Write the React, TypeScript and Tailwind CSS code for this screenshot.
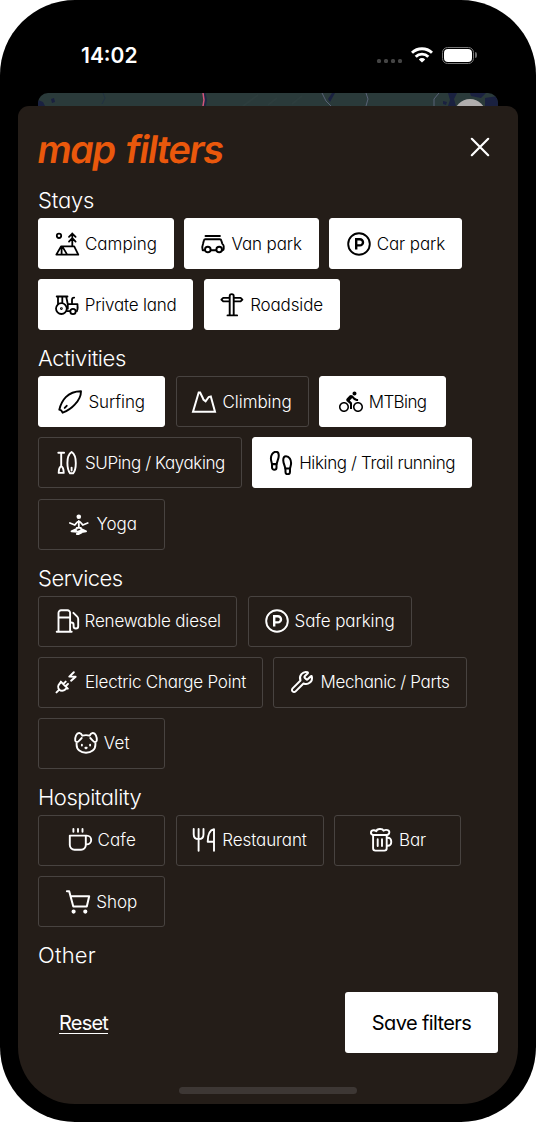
import type { ReactNode } from "react";
import { MdDirectionsBike } from "react-icons/md";
import { Footprints, Wrench } from "lucide-react";

function Glyph({ children, width = 1.9 }: { children: ReactNode; width?: number }) {
  return (
    <svg
      viewBox="0 0 24 24"
      className="h-6 w-6 shrink-0 overflow-visible"
      fill="none"
      stroke="currentColor"
      strokeWidth={width}
      strokeLinecap="round"
      strokeLinejoin="round"
    >
      {children}
    </svg>
  );
}

const Camping = () => (
  <Glyph width={1.8}>
    <circle cx="4" cy="3.8" r="2.2" />
    <path d="M17.3 1.4v12.4M14 4.9l3.3-3.3 3.3 3.3M14 9.6l3.3-3.4 3.3 3.4" />
    <path d="M6.2 14.3h13l4.1 8.3H1.3l4.9-8.3ZM6.6 14.6v8M7.4 14.6l4.8 8" />
  </Glyph>
);

const Van = () => (
  <Glyph width={1.9}>
    <path d="M4.5 4h14.4" />
    <path d="M3.8 18.2H1.7c-.6-2-.5-4.6.4-6.6l.8-3.2c.2-.9.7-1.2 1.5-1.2h14.4c.8 0 1.3.4 1.500 1.200l.9 3.200c1 .9 1.500 1.500 1.500 2.600v2.800c0 .8-.4 1.200-1.200 1.200h-.8M10 18.200h5.200" />
    <circle cx="6.8" cy="17.5" r="2.8" />
    <circle cx="18.2" cy="17.5" r="2.8" />
  </Glyph>
);

const Parking = () => (
  <Glyph width={1.9}>
    <circle cx="12" cy="12" r="10.8" />
    <path d="M9.200 17.400V7.200h3.700a3.100 3.100 0 0 1 0 6.200H9.200" strokeWidth="2.4" strokeLinecap="butt" strokeLinejoin="miter" />
  </Glyph>
);

const Tractor = () => (
  <Glyph width={1.8}>
    <path d="M1.700 3.500h10.800M3 3.700v7M7.300 3.700v5.600M11.200 3.700l1.600 7.500h9.700v5M12.800 11.200v4.500M17 11V6.800c0-1.400.8-2.200 2.200-2.200M12 18.200h3M22.500 12.300c.5 2 .4 4-.6 5.900" />
    <circle cx="6.4" cy="15.6" r="5.4" />
    <circle cx="6.4" cy="15.6" r=".5" />
    <circle cx="18" cy="18.5" r="2.7" />
  </Glyph>
);

const Signpost = () => (
  <Glyph width={1.9}>
    <path d="M9.700 22.400V3c0-2.500 4-2.500 4 0v19.400M7.500 22.400h9.600M9.700 4.900H3.200L1.400 6.600l1.800 1.800h6.500M13.700 4.900h6.900l1.800 1.700-1.800 1.800h-6.900M9.700 4.900v3.500" />
  </Glyph>
);

const Surfboard = () => (
  <Glyph width={1.9}>
    <path d="M23 1.300C17.500 1.300 11.500 3.400 7.800 7.200c-3.200 3.300-5.400 8-6.500 12.500l1.800.6 1.600 2.400c5-1.900 8.700-4.300 12-8C20.600 10.700 23 6 23 1.300Z" />
    <path d="m6.700 17.900 2-2.100" />
  </Glyph>
);

const Mountain = () => (
  <Glyph width={2}>
    <path d="M1 21.700 6.700 2.500h1.400l2.700 5.500.6 1.600 2.200 1.700L16.700 7l2.100-.6L23 21.700Z" strokeLinejoin="miter" />
  </Glyph>
);

const Paddle = () => (
  <Glyph width={1.9}>
    <path d="M3.300 1.800h5.800M6.200 2v13.200M6.200 15c-1.700 1.100-2.500 2.800-2.500 6.900h5c0-4.100-.8-5.800-2.500-6.900Z" />
    <path d="M16.600 1c-2.800 1.800-4.200 6.300-4.200 11 0 4.600 1.200 8.500 2.700 10.300h3c1.600-1.800 2.700-5.700 2.700-10.300 0-4.700-1.400-9.200-4.200-11ZM16.600 16.600v3" />
  </Glyph>
);

const Yoga = () => (
  <Glyph width={1.8}>
    <circle cx="11.8" cy="4.7" r="1.4" fill="currentColor" />
    <path d="M11.800 9v6.700M11.800 9.300c-1.700 0-2.400 1.700-4 3.700l-4.900-2M11.800 9.300c1.700 0 2.400 1.700 4 3.700l4.900-2M9.700 15.900h4.200" />
    <path d="M9.800 16.800 4.500 19.400l5.600.4 5.400-1.700M13.800 16.800l5.300 2.600-4.600.6-4.700 2M4.800 19.500l4.500-.6M9.800 22h2l3-1.500" />
  </Glyph>
);

const Fuel = () => (
  <Glyph width={1.9}>
    <path d="M3.500 22.500V4A2.600 2.600 0 0 1 6.100 1.300h6.400A2.600 2.600 0 0 1 15.100 4v18.500M1.700 22.700h15M3.500 8.500h11.600M15.100 13.500h1.100c1.500 0 2.400.8 2.400 2.300v1.500c0 3 4.600 3 4.600 0V10c0-1-.3-1.700-1-2.400l-3.800-3.800" />
  </Glyph>
);

const PlugBolt = () => (
  <Glyph width={2}>
    <path d="m1.500 22.400 2.800-2.800M5.800 11.600l7 7M8.400 13.900l2.300-2.300M10.700 16.200l2.300-2.300M5.900 12.200l-1.400 1.500c-1.600 1.600-1.700 4.300-.2 5.900s4.200 1.600 5.900 0l1.600-1.500" />
    <path d="m18.800 2.300-4.500 4.300 6.300.1-4.500 4" />
  </Glyph>
);

const Dog = () => (
  <Glyph width={1.9}>
    <path d="M8.300 4.700c2.400-.7 5-.7 7.400 0C17 1.500 20.300 1 21.900 4.300c.8 1.800 1.100 3.700.9 5-.3 2.200-2.600 2.300-3.800.5L16.300 7M8.300 4.700C7 1.500 3.700 1 2.100 4.300c-.8 1.800-1.100 3.700-.9 5 .3 2.200 2.600 2.300 3.800.5L7.700 7M2.600 11v2.700c0 5 4 8 9.400 8s9.400-3 9.400-8V11" />
    <path d="M7.900 13.700v.8M16.100 13.700v.8M11.300 16.800h1.400l-.7.6Z" />
  </Glyph>
);

const Cup = () => (
  <Glyph width={1.9}>
    <path d="M5.400 1v2.800M10 1v2.800M14.500 1v2.800M1.800 7.600h16V17a4.700 4.700 0 0 1-4.700 4.700H6.500A4.700 4.700 0 0 1 1.800 17ZM17.800 7.600h1a4.400 4.400 0 0 1 0 8.800h-1" />
  </Glyph>
);

const Cutlery = () => (
  <Glyph width={1.9}>
    <path d="M1.700 1v5.200c0 3 2 4.900 4.900 4.900s4.900-1.900 4.900-4.900V1M6.600 1v21.700M22 22.700V1.200c-4.500.8-6.300 5-6.300 12.600H22" />
  </Glyph>
);

const Beer = () => (
  <Glyph width={1.9}>
    <path d="M4.100 7v13.300c0 1.500.8 2.300 2.300 2.300h9c1.500 0 2.300-.8 2.300-2.300V7M4.100 7h13.600M8.700 11.200v6.900M13 11.200v6.900M17.700 9.700h1.200a3.300 3.300 0 0 1 3.300 3.300v1.500a3.300 3.300 0 0 1-3.300 3.300h-1.200" />
    <path d="M4 7C.9 6.300 1.400 1.900 5 2.200c1.200.1 1.700.6 2.300 1C7.900.5 13.600.3 14.500 2.700 17.300 1 20.600 2.300 20.300 4.700c-.2 1.700-1.300 2.300-2.600 2.300" />
  </Glyph>
);

const Cart = () => (
  <Glyph width={2}>
    <path d="M.9 1.200h2.300l4.100 15.400h13.500L23.200 6.300H4.700" />
    <circle cx="7.6" cy="21.6" r="1.1" fill="currentColor" />
    <circle cx="19.3" cy="21.6" r="1.1" fill="currentColor" />
  </Glyph>
);

type Option = { label: string; icon: ReactNode; box: string; text?: string; on?: boolean };
type Group = { title: string; tracking: string; options: Option[] };

const groups: Group[] = [
  {
    title: "Stays",
    tracking: "tracking-[-0.2px]",
    options: [
      { label: "Camping", icon: <Camping />, box: "w-[136px]", text: "tracking-[0.05px]", on: true },
      { label: "Van park", icon: <Van />, box: "w-[135px]", text: "tracking-[-0.12px]", on: true },
      { label: "Car park", icon: <Parking />, box: "w-[133px]", text: "tracking-[-0.1px]", on: true },
      { label: "Private land", icon: <Tractor />, box: "w-[155.4px]", text: "tracking-[-0.2px]", on: true },
      { label: "Roadside", icon: <Signpost />, box: "w-[136px]", text: "tracking-[-0.15px]", on: true },
    ],
  },
  {
    title: "Activities",
    tracking: "tracking-[-0.4px]",
    options: [
      { label: "Surfing", icon: <Surfboard />, box: "w-[127.4px]", text: "tracking-[-0.1px]", on: true },
      { label: "Climbing", icon: <Mountain />, box: "w-[133px]", text: "tracking-[-0.05px]" },
      { label: "MTBing", icon: <MdDirectionsBike className="h-6 w-6 shrink-0" />, box: "w-[127.6px]", text: "tracking-[-0.6px]", on: true },
      { label: "SUPing / Kayaking", icon: <Paddle />, box: "w-[204px]", text: "tracking-[-0.4px]" },
      { label: "Hiking / Trail running", icon: <Footprints viewBox="1.3 1.3 21.4 21.4" strokeWidth={1.8} className="h-6 w-6 shrink-0" />, box: "w-[220px]", text: "tracking-[-0.37px]", on: true },
      { label: "Yoga", icon: <Yoga />, box: "w-[127.4px]", text: "tracking-[-0.1px]" },
    ],
  },
  {
    title: "Services",
    tracking: "tracking-[-0.5px]",
    options: [
      { label: "Renewable diesel", icon: <Fuel />, box: "w-[199.4px]", text: "tracking-[-0.18px]" },
      { label: "Safe parking", icon: <Parking />, box: "w-[164px]", text: "tracking-[-0.08px]" },
      { label: "Electric Charge Point", icon: <PlugBolt />, box: "w-[225px]", text: "tracking-[-0.24px]" },
      { label: "Mechanic / Parts", icon: <Wrench strokeWidth={2} className="h-6 w-6 shrink-0" />, box: "w-[193.5px]", text: "tracking-[-0.36px]" },
      { label: "Vet", icon: <Dog />, box: "w-[127.4px]", text: "tracking-[0.2px]" },
    ],
  },
  {
    title: "Hospitality",
    tracking: "tracking-[-0.45px]",
    options: [
      { label: "Cafe", icon: <Cup />, box: "w-[127.4px]", text: "tracking-[0.1px]" },
      { label: "Restaurant", icon: <Cutlery />, box: "w-[148px]", text: "tracking-[-0.1px]" },
      { label: "Bar", icon: <Beer />, box: "w-[127.4px]", text: "tracking-[-0.2px]" },
      { label: "Shop", icon: <Cart />, box: "w-[127.4px]" },
    ],
  },
  { title: "Other", tracking: "tracking-[0.2px]", options: [] },
];

function FilterButton({ option }: { option: Option }) {
  const tone = option.on ? "border-white bg-white text-black" : "border-[#484340] text-white";
  return (
    <button className={`flex h-[51px] items-center justify-center gap-[6px] rounded-[3px] border ${option.box} ${tone}`}>
      {option.icon}
      <span className={`text-[17px] leading-6 font-light whitespace-nowrap ${option.text ?? ""}`}>{option.label}</span>
    </button>
  );
}

function StatusBar() {
  return (
    <div className="flex h-[93px] items-start justify-between pr-[59px] pl-[81px] text-white">
      <span className="mt-[43px] text-[21px] leading-[26px] font-semibold">14:02</span>
      <div className="mt-[46px] flex h-[18px] items-center">
        <div className="mt-[12px] flex gap-[3px]">
          {[0, 1, 2, 3].map((i) => (
            <span key={i} className="h-1 w-1 rounded-[1.5px] bg-[#444444]" />
          ))}
        </div>
        <svg viewBox="0 0 22 16" className="ml-[9px] h-4 w-[22px]" fill="none" stroke="currentColor" strokeWidth="2.9">
          <path d="M1 5.800a14.300 14.300 0 0 1 20 0M4.700 9.700a9 9 0 0 1 12.600 0" />
          <path d="m11 15.600-3.200-3.200a4.500 4.500 0 0 1 6.400 0Z" fill="currentColor" stroke="none" />
        </svg>
        <div className="ml-[9px] flex h-[17px] w-[32px] rounded-[5.5px] border border-[#777777] p-[1px]">
          <div className="flex-1 rounded-[4px] bg-white" />
        </div>
        <span className="ml-[1px] h-[6px] w-[2px] rounded-r-full bg-[#6a6a6a]" />
      </div>
    </div>
  );
}

function MapStrip() {
  return (
    <div className="mx-[38px] h-[13px] overflow-hidden rounded-t-[10px] bg-[#2a3a3a]">
      <svg viewBox="0 0 460 13" className="h-[13px] w-[460px]" fill="none">
        <path d="M0 7l5 2 2 4H0ZM13 6l3-1 1 4-3 1ZM290 6l4-6h3l-5 9ZM410 0h9l-3 6 2 7h-8l2-6ZM432 0h16l-5 5-10-2ZM447 5l13-2v10h-13ZM405 8l4 1-1 3-3-1Z" fill="#1a2140" />
        <path d="M205 13l15-11M230 12l9-7M254 11l10-8" stroke="#2d3d3d" strokeWidth="2" />
        <path d="M166.500 13l1-6-1.500-7" stroke="#1c2744" strokeWidth="3" />
        <path d="M165 13l1-6-1-7" stroke="#d4557a" strokeWidth="1.5" />
        <path d="M284 0l4 8 5 5M328 0l2 6-2 7M396 13v-7l5-6" stroke="#596277" strokeWidth="1" />
        <path d="M65 0l2 5-3 6" stroke="#213044" strokeWidth=".8" />
        <circle cx="432" cy="22" r="16" fill="#b0adad" />
      </svg>
    </div>
  );
}

export default function App() {
  return (
    <main className="h-[1122px] w-[536px] bg-white">
      <div className="flex h-full flex-col overflow-hidden rounded-[75px] bg-black font-['Inter','Liberation_Sans',sans-serif] [font-feature-settings:'cv11']">
        <StatusBar />
        <MapStrip />
        <section className="mx-[18px] flex h-[998px] flex-col rounded-t-[11px] rounded-b-[57px] bg-[#241d18] px-[20px] text-white">
          <header className="flex h-[66px] items-start justify-between">
            <h1 className="mt-[19px] -ml-[2px] origin-[0_75%] -skew-x-[9deg] text-[38px] leading-[48px] font-semibold tracking-[-1.45px] [word-spacing:3px] text-[#ea580c]">map filters</h1>
            <button aria-label="Close" className="mt-[31px] mr-[8px]">
              <svg viewBox="0 0 20 20" className="h-5 w-5" fill="none" stroke="currentColor" strokeWidth="2.2" strokeLinecap="round">
                <path d="M1.800 1.800l16.400 16.400M18.200 1.800 1.800 18.200" />
              </svg>
            </button>
          </header>
          {groups.map((group) => (
            <div key={group.title}>
              <h2 className={`flex h-[46px] items-center pt-[10px] text-[22px] leading-7 font-light ${group.tracking}`}>{group.title}</h2>
              <div className="flex flex-wrap gap-[10.2px]">
                {group.options.map((option) => (
                  <FilterButton key={option.label} option={option} />
                ))}
              </div>
            </div>
          ))}
          <footer className="mt-auto flex items-center justify-between pb-[34px] text-[20px]">
            <button className="ml-[21px] tracking-[-0.8px] underline decoration-1 underline-offset-[3px]">Reset</button>
            <button className="h-[61px] w-[153px] rounded-[3px] bg-white tracking-[-0.6px] text-black">Save filters</button>
          </footer>
          <div className="mx-auto mb-[10px] h-[7px] w-[178px] shrink-0 rounded-full bg-[#3d3734]" />
        </section>
      </div>
    </main>
  );
}
